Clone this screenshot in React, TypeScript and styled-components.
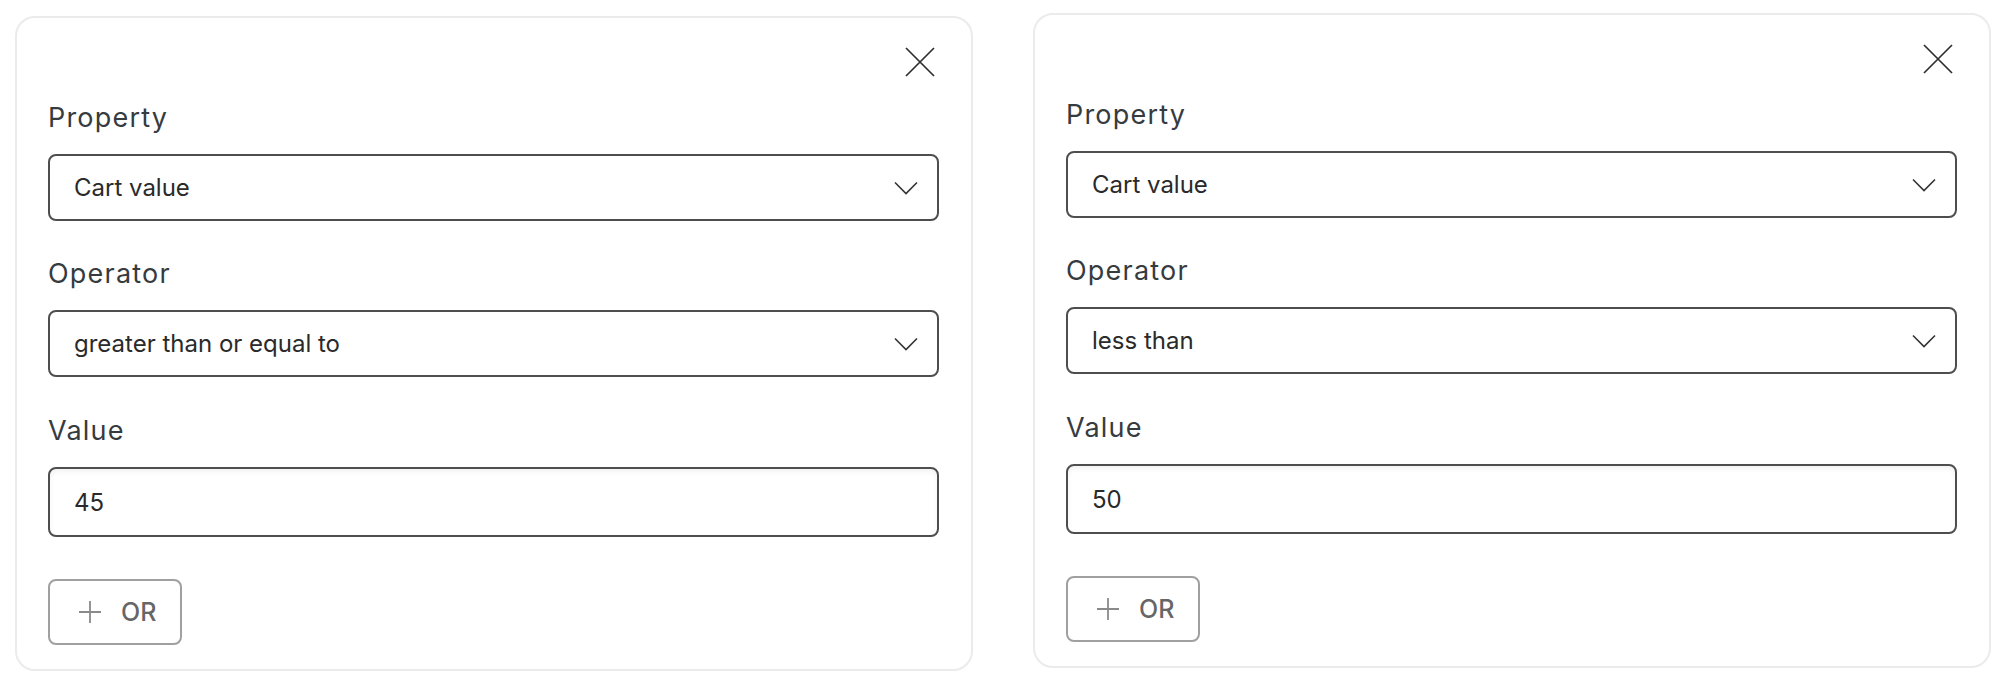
import React from "react";
import styled, { createGlobalStyle } from "styled-components";

const GlobalStyle = createGlobalStyle`
  html, body {
    margin: 0;
    padding: 0;
    background: #ffffff;
  }
  body {
    font-family: Inter, "Noto Sans", "Liberation Sans", sans-serif;
    -webkit-font-smoothing: antialiased;
  }
`;

const Page = styled.div`
  display: flex;
  align-items: flex-start;
  gap: 60px;
  padding-left: 15px;
`;

const Card = styled.section<{ $top: number }>`
  box-sizing: border-box;
  width: 958px;
  height: 655px;
  margin-top: ${(p) => p.$top}px;
  border: 2px solid #ebebeb;
  border-radius: 20px;
  background: #ffffff;
  padding: 29px 32px 24px 31px;
  display: flex;
  flex-direction: column;
`;

const Header = styled.div`
  display: flex;
  justify-content: flex-end;
  height: 30px;
  padding-right: 4px;
`;

const CloseButton = styled.button`
  width: 30px;
  height: 30px;
  padding: 0;
  border: none;
  background: transparent;
  display: flex;
  align-items: center;
  justify-content: center;
  color: #2f2f2f;
  cursor: pointer;
`;

const Field = styled.div<{ $gap: number }>`
  display: flex;
  flex-direction: column;
  margin-top: ${(p) => p.$gap}px;
`;

const Label = styled.label`
  font-size: 27px;
  line-height: 36px;
  letter-spacing: 1.2px;
  color: #363b40;
  margin-bottom: 18px;
`;

const SelectBox = styled.div`
  box-sizing: border-box;
  height: 67px;
  border: 2px solid #4e4e4e;
  border-radius: 8px;
  padding: 0 19px 0 24px;
  display: flex;
  align-items: center;
  justify-content: space-between;
  font-size: 24px;
  color: #2a2a2a;
`;

const ValueInput = styled.div`
  box-sizing: border-box;
  height: 70px;
  border: 2px solid #4e4e4e;
  border-radius: 8px;
  padding: 0 24px;
  display: flex;
  align-items: center;
  font-size: 24px;
  color: #2a2a2a;
  box-shadow: inset 0 3px 5px rgba(0, 0, 0, 0.05);
`;

const OrButton = styled.button`
  box-sizing: border-box;
  margin-top: 42px;
  width: 134px;
  height: 66px;
  border: 2px solid #a0a0a0;
  border-radius: 8px;
  background: #ffffff;
  padding: 0 0 0 29px;
  display: flex;
  align-items: center;
  gap: 20px;
  font-family: Inter, "Noto Sans", sans-serif;
  font-size: 25px;
  font-weight: 500;
  color: #666666;
  cursor: pointer;
`;

const Chevron = () => (
  <svg width="24" height="14" viewBox="0 0 24 14" fill="none">
    <path d="M1 1.5 L12 12.5 L23 1.5" stroke="#333" strokeWidth="1.6" />
  </svg>
);

const CloseIcon = () => (
  <svg width="30" height="30" viewBox="0 0 30 30" fill="none">
    <path d="M1 1 L29 29 M29 1 L1 29" stroke="#2f2f2f" strokeWidth="1.7" />
  </svg>
);

const PlusIcon = () => (
  <svg width="22" height="22" viewBox="0 0 22 22" fill="none">
    <path d="M11 0 V22 M0 11 H22" stroke="#8a8a8a" strokeWidth="1.8" />
  </svg>
);

type Condition = { top: number; property: string; operator: string; value: string };

const conditions: Condition[] = [
  { top: 16, property: "Cart value", operator: "greater than or equal to", value: "45" },
  { top: 13, property: "Cart value", operator: "less than", value: "50" },
];

const ConditionCard = ({ c }: { c: Condition }) => (
  <Card $top={c.top}>
    <Header>
      <CloseButton aria-label="Close">
        <CloseIcon />
      </CloseButton>
    </Header>
    <Field $gap={23}>
      <Label>Property</Label>
      <SelectBox>
        <span>{c.property}</span>
        <Chevron />
      </SelectBox>
    </Field>
    <Field $gap={35}>
      <Label>Operator</Label>
      <SelectBox>
        <span>{c.operator}</span>
        <Chevron />
      </SelectBox>
    </Field>
    <Field $gap={36}>
      <Label>Value</Label>
      <ValueInput>{c.value}</ValueInput>
    </Field>
    <div>
      <OrButton>
        <PlusIcon />
        <span>OR</span>
      </OrButton>
    </div>
  </Card>
);

export default function App() {
  return (
    <>
      <GlobalStyle />
      <Page>
        {conditions.map((c, i) => (
          <ConditionCard key={i} c={c} />
        ))}
      </Page>
    </>
  );
}
